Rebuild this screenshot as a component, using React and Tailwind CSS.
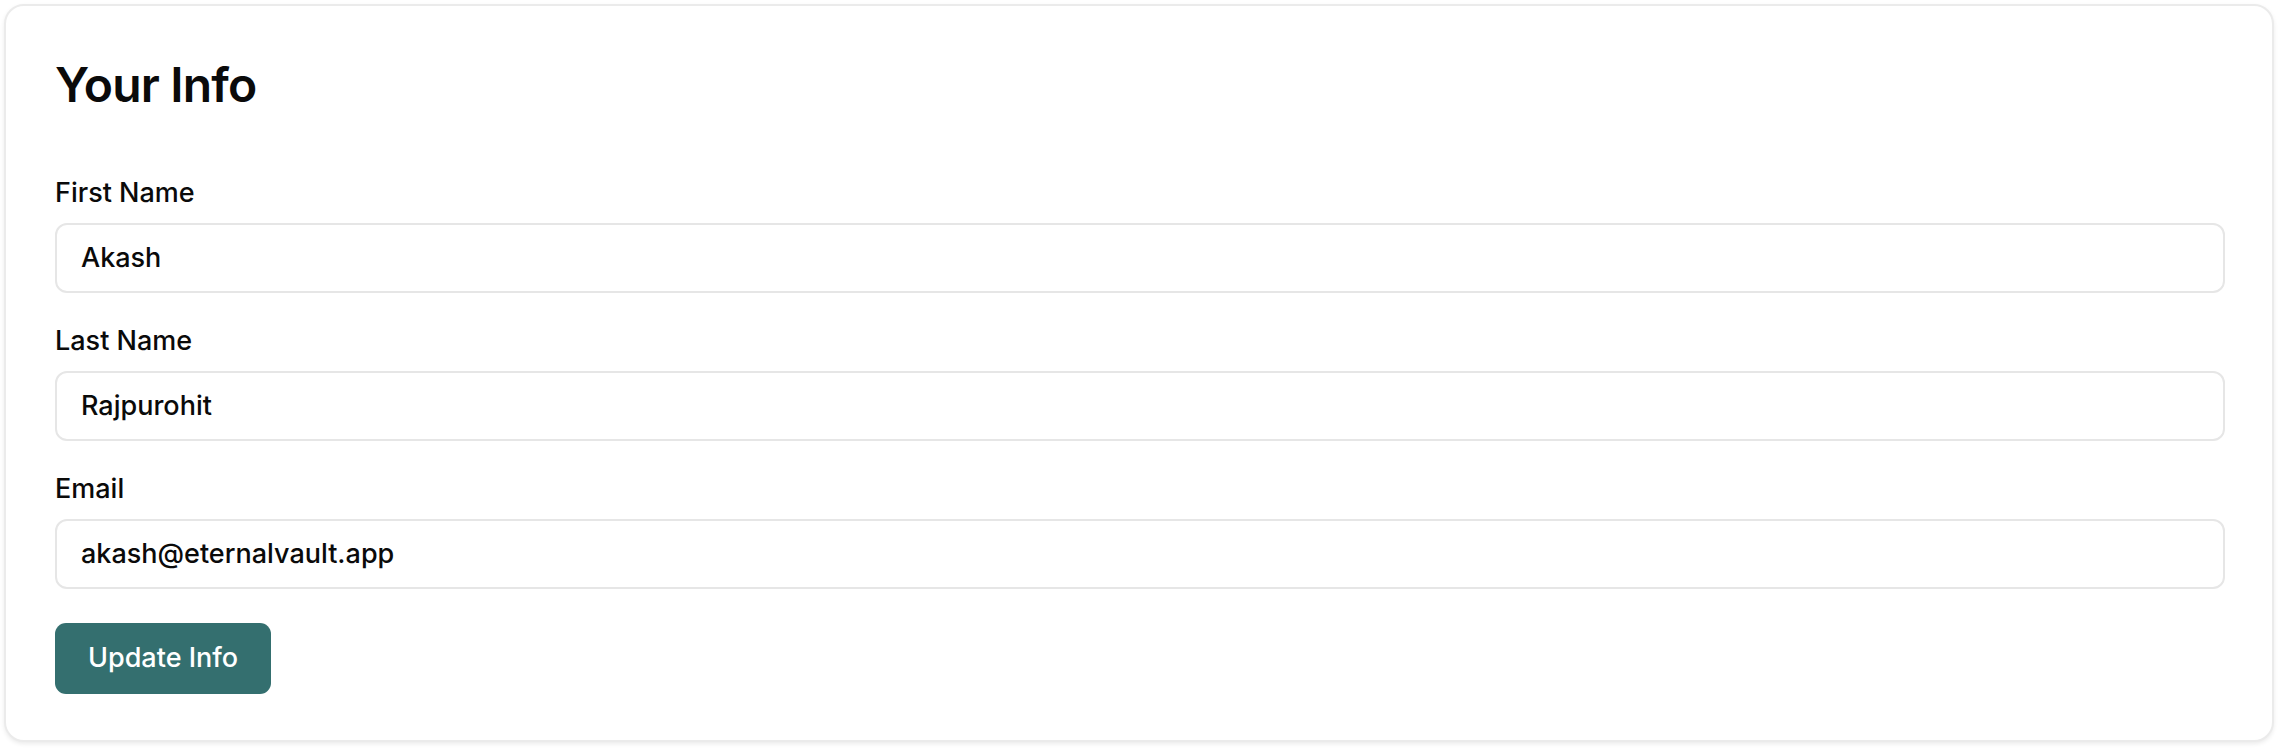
export default function App() {
  const fields = [
    { label: "First Name", value: "Akash" },
    { label: "Last Name", value: "Rajpurohit" },
    { label: "Email", value: "akash@eternalvault.app" },
  ];
  return (
    <div className="w-[2280px] h-[748px] bg-white p-[4px] pr-[6px] pb-[6px]" style={{ fontFamily: "Inter, 'Noto Sans', sans-serif" }}>
      <div className="h-full rounded-[20px] border-2 border-[#ebebeb] bg-white shadow-[0_2px_4px_rgba(0,0,0,0.08)] pt-[50px] pl-[49px] pr-[47px] pb-[48px] text-[#0a0a0a]">
        <h1 className="text-[48px] leading-[58px] font-semibold tracking-[-0.8px]">Your Info</h1>
        <div className="mt-[59px] flex flex-col gap-[28px]">
          {fields.map((f) => (
            <div key={f.label} className="flex flex-col gap-[10px]">
              <label className="text-[27px] leading-[40px] font-medium">{f.label}</label>
              <div className="h-[70px] rounded-[12px] border-2 border-[#e6e6e6] flex items-center pl-[24px] text-[27px] font-medium">
                {f.value}
              </div>
            </div>
          ))}
        </div>
        <button className="mt-[34px] h-[71px] rounded-[11px] bg-[#346f6f] px-[33px] text-[27px] font-medium text-white">
          Update Info
        </button>
      </div>
    </div>
  );
}
